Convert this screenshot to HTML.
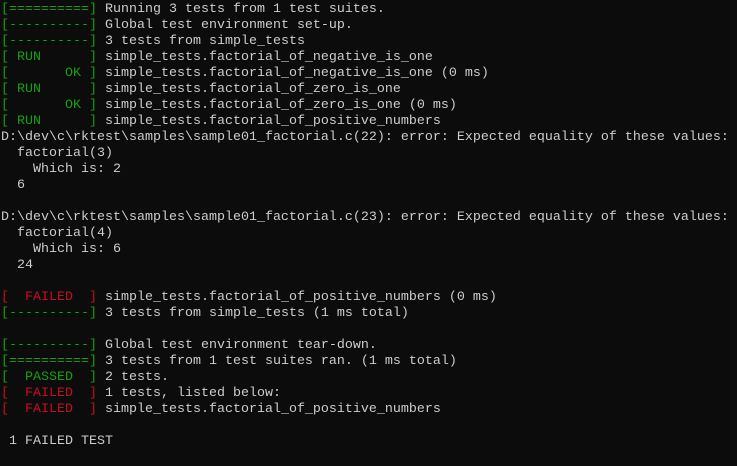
<!DOCTYPE html>
<html><head><meta charset="utf-8"><style>
html,body{margin:0;padding:0;background:#0c0c0c;width:737px;height:466px;overflow:hidden}
pre{margin:0;padding:2px 0 0 1px;font-family:"Liberation Mono",monospace;font-size:13.333px;line-height:16px;color:#cccccc;white-space:pre}
.g{color:#13a10e}.r{color:#c50f1f}
</style></head><body><pre><span class="g">[==========]</span> Running 3 tests from 1 test suites.
<span class="g">[----------]</span> Global test environment set-up.
<span class="g">[----------]</span> 3 tests from simple_tests
<span class="g">[ RUN      ]</span> simple_tests.factorial_of_negative_is_one
<span class="g">[       OK ]</span> simple_tests.factorial_of_negative_is_one (0 ms)
<span class="g">[ RUN      ]</span> simple_tests.factorial_of_zero_is_one
<span class="g">[       OK ]</span> simple_tests.factorial_of_zero_is_one (0 ms)
<span class="g">[ RUN      ]</span> simple_tests.factorial_of_positive_numbers
D:\dev\c\rktest\samples\sample01_factorial.c(22): error: Expected equality of these values:
  factorial(3)
    Which is: 2
  6

D:\dev\c\rktest\samples\sample01_factorial.c(23): error: Expected equality of these values:
  factorial(4)
    Which is: 6
  24

<span class="r">[  FAILED  ]</span> simple_tests.factorial_of_positive_numbers (0 ms)
<span class="g">[----------]</span> 3 tests from simple_tests (1 ms total)

<span class="g">[----------]</span> Global test environment tear-down.
<span class="g">[==========]</span> 3 tests from 1 test suites ran. (1 ms total)
<span class="g">[  PASSED  ]</span> 2 tests.
<span class="r">[  FAILED  ]</span> 1 tests, listed below:
<span class="r">[  FAILED  ]</span> simple_tests.factorial_of_positive_numbers

 1 FAILED TEST
</pre></body></html>
